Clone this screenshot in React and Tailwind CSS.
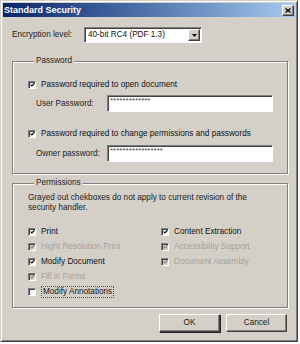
import React from 'react';

function Check({ checked, disabled }) {
  return (
    <span
      className={`flex h-[8px] w-[8px] shrink-0 items-center justify-center border border-t-[#808080] border-l-[#808080] border-b-white border-r-white shadow-[inset_1px_1px_0_#404040] ${
        disabled ? 'bg-[#d4d0c8]' : 'bg-white'
      }`}
    >
      {checked && (
        <svg width="6" height="6" viewBox="0 0 6 6" className="ml-[1px] mt-[1px]">
          <path
            d="M0.6 2.4 L2.2 4.1 L5.4 0.9"
            fill="none"
            stroke={disabled ? '#808080' : '#000'}
            strokeWidth="1.3"
          />
        </svg>
      )}
    </span>
  );
}

function CheckRow({ checked, disabled, label, focus }) {
  return (
    <div className="flex h-[15px] items-center gap-[5px]">
      <Check checked={checked} disabled={disabled} />
      <span
        className={`${disabled ? 'text-[#a4a09a]' : 'text-[#111]'} ${
          focus ? 'border border-dotted border-[#555] px-[1px] leading-[10px]' : ''
        }`}
      >
        {label}
      </span>
    </div>
  );
}

function Sunken({ className, children }) {
  return (
    <div
      className={`border border-t-[#808080] border-l-[#808080] border-b-white border-r-white bg-white shadow-[inset_1px_1px_0_#404040] ${className}`}
    >
      {children}
    </div>
  );
}

function Button({ label, def }) {
  return (
    <button
      className={`h-[18px] w-[61px] border border-t-white border-l-white border-b-[#404040] border-r-[#404040] bg-[#d4d0c8] text-[#222] ${
        def ? 'shadow-[inset_-1px_-1px_0_#808080,1px_1px_0_#222]' : 'shadow-[inset_-1px_-1px_0_#808080]'
      }`}
    >
      {label}
    </button>
  );
}

export default function App() {
  return (
    <div className="h-[344px] w-[300px] bg-white font-['Liberation_Sans',Arial,sans-serif] text-[8.2px] leading-[10px]">
      <div className="flex h-[342px] w-[298px] flex-col border border-t-[#d4d0c8] border-l-[#d4d0c8] border-b-[#404040] border-r-[#404040] bg-[#d4d0c8] p-[2px] shadow-[inset_1px_1px_0_#ffffff,inset_-1px_-1px_0_#808080]">
        {/* title bar */}
        <div className="flex h-[14px] items-center justify-between bg-gradient-to-r from-[#0a246a] to-[#a6caf0] pl-[1px] pr-[1px]">
          <span className="text-[9px] font-bold text-white">Standard Security</span>
          <span className="flex h-[11px] w-[12px] items-center justify-center border border-t-white border-l-white border-b-[#404040] border-r-[#404040] bg-[#d4d0c8] shadow-[inset_-1px_-1px_0_#808080]">
            <svg width="6" height="5" viewBox="0 0 6 5">
              <path d="M0.5 0.5 L5.5 4.5 M5.5 0.5 L0.5 4.5" stroke="#000" strokeWidth="1.3" />
            </svg>
          </span>
        </div>

        {/* encryption level */}
        <div className="mt-[10px] flex items-center pl-[9px]">
          <span className="w-[72px] text-[#222]">Encryption level:</span>
          <Sunken className="flex h-[16px] w-[118px] items-center justify-between pl-[3px] pr-[1px]">
            <span className="text-[#111]">40-bit RC4 (PDF 1.3)</span>
            <span className="flex h-[12px] w-[12px] items-center justify-center border border-t-white border-l-white border-b-[#404040] border-r-[#404040] bg-[#d4d0c8] shadow-[inset_-1px_-1px_0_#808080]">
              <svg width="5" height="3" viewBox="0 0 5 3">
                <path d="M0 0 H5 L2.5 3 Z" fill="#000" />
              </svg>
            </span>
          </Sunken>
        </div>

        {/* password group */}
        <fieldset className="ml-[9px] mt-[13px] w-[276px] border border-[#808080] pb-[11px] pl-[15px] pt-[11px] shadow-[inset_1px_1px_0_#ffffff,1px_1px_0_#ffffff]">
          <legend className="ml-[6px] bg-[#d4d0c8] px-[2px] text-[#222]">Password</legend>
          <CheckRow checked label="Password required to open document" />
          <div className="mt-[3px] flex items-center pl-[8px]">
            <span className="w-[71px] text-[#222]">User Password:</span>
            <Sunken className="h-[17px] w-[166px] pl-[2px] pt-[1px] text-[8px] leading-[8px] text-[#444]">
              *************
            </Sunken>
          </div>
          <div className="mt-[14px]">
            <CheckRow checked label="Password required to change permissions and passwords" />
          </div>
          <div className="mt-[4px] flex items-center pl-[8px]">
            <span className="w-[71px] text-[#222]">Owner password:</span>
            <Sunken className="h-[17px] w-[166px] pl-[2px] pt-[1px] text-[8px] leading-[8px] text-[#444]">
              *****************
            </Sunken>
          </div>
        </fieldset>

        {/* permissions group */}
        <fieldset className="ml-[9px] mt-[4px] w-[276px] border border-[#808080] pb-[8px] pl-[15px] pt-[5px] shadow-[inset_1px_1px_0_#ffffff,1px_1px_0_#ffffff]">
          <legend className="ml-[6px] bg-[#d4d0c8] px-[2px] text-[#222]">Permissions</legend>
          <p className="text-[#222]">
            Grayed out chekboxes do not apply to current revision of the
            <br />
            security handler.
          </p>
          <div className="mt-[11px] grid grid-cols-[133px_1fr]">
            <div className="flex flex-col">
              <CheckRow checked label="Print" />
              <CheckRow checked disabled label="Hight Resolution Print" />
              <CheckRow checked label="Modify Document" />
              <CheckRow checked disabled label="Fill in Forms" />
              <CheckRow label="Modify Annotations" focus />
            </div>
            <div className="flex flex-col">
              <CheckRow checked label="Content Extraction" />
              <CheckRow checked disabled label="Accessibility Support" />
              <CheckRow checked disabled label="Document Assembly" />
            </div>
          </div>
        </fieldset>

        {/* buttons */}
        <div className="mt-[6px] flex gap-[6px] pl-[156px]">
          <Button label="OK" def />
          <Button label="Cancel" />
        </div>
      </div>
    </div>
  );
}
